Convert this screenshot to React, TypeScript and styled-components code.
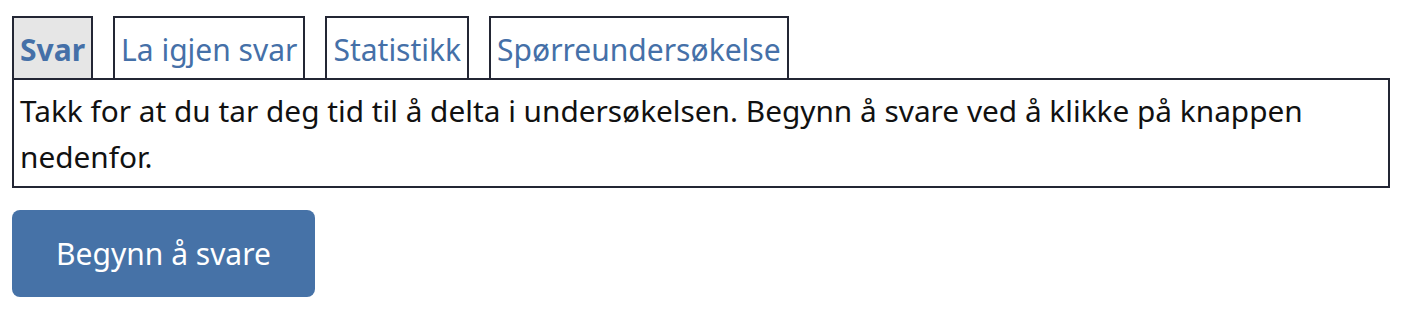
import styled, { createGlobalStyle } from 'styled-components';

const Global = createGlobalStyle`
  body {
    margin: 0;
    background: #fff;
    font-family: 'Noto Sans', 'Open Sans', sans-serif;
  }
`;

const Page = styled.div`
  padding: 16px 22px 0 12px;
`;

const TabList = styled.div`
  display: flex;
  gap: 20px;
  align-items: flex-end;
`;

const Tab = styled.button<{ $active?: boolean }>`
  font-family: inherit;
  font-size: 30px;
  font-weight: ${({ $active }) => ($active ? 700 : 400)};
  color: #4570a8;
  background: ${({ $active }) => ($active ? '#e6e6e6' : '#fff')};
  border: 2px solid #232634;
  border-bottom: none;
  height: 62px;
  padding: 4px 6px 0;
  margin: 0;
  line-height: 1;
  cursor: pointer;
`;

const Panel = styled.div`
  border: 2px solid #232634;
  padding: 8px 6px 6px;
  font-size: 29.8px;
  line-height: 46px;
  color: #111;
`;

const StartButton = styled.button`
  margin-top: 22px;
  width: 303px;
  height: 87px;
  border: none;
  border-radius: 8px;
  background: #4672a7;
  color: #fff;
  font-family: inherit;
  font-size: 30px;
  cursor: pointer;
`;

const TABS = ['Svar', 'La igjen svar', 'Statistikk', 'Spørreundersøkelse'];

export default function App() {
  return (
    <>
      <Global />
      <Page>
        <TabList>
          {TABS.map((t, i) => (
            <Tab key={t} $active={i === 0}>
              {t}
            </Tab>
          ))}
        </TabList>
        <Panel>
          Takk for at du tar deg tid til å delta i undersøkelsen. Begynn å svare ved å klikke på
          knappen nedenfor.
        </Panel>
        <StartButton>Begynn å svare</StartButton>
      </Page>
    </>
  );
}
